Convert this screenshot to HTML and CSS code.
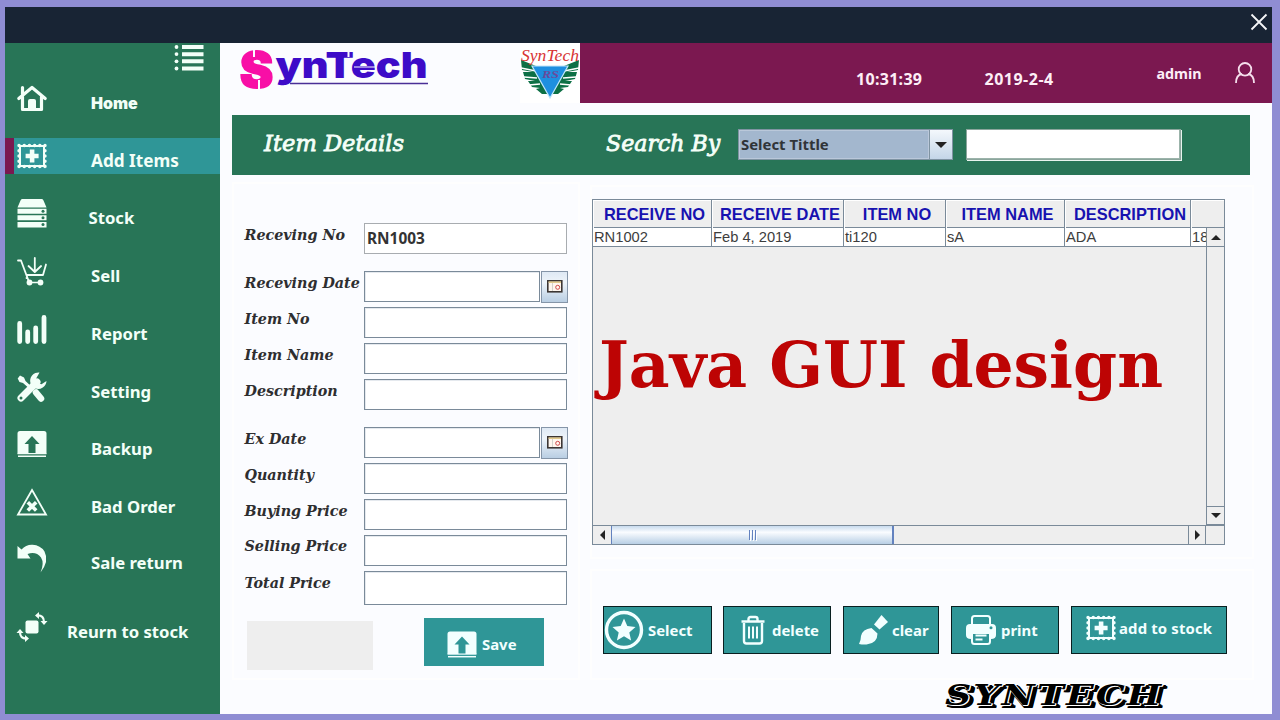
FILE: index.html
```
<!DOCTYPE html>
<html lang="en">
<head>
<meta charset="utf-8">
<title>SynTech - Item Details</title>
<link rel="stylesheet" href="styles.css">
</head>
<body>
<svg class="defs" width="0" height="0">
  <symbol id="i-stamp" viewBox="0 0 30 26">
    <rect x="3" y="3" width="24" height="20" fill="none" stroke="currentColor" stroke-width="2"/>
    <path d="M2 2.500h26M2 23.500h26M2 2.500v21M28 2.500v21" fill="none" stroke="currentColor" stroke-width="3.400" stroke-linecap="round" stroke-dasharray="0.100 5.100"/>
    <path d="M12.800 6.500h4.600v4.200h4.200v4.600h-4.200v4.200h-4.600v-4.200H8.600v-4.600h4.200z" fill="currentColor"/>
  </symbol>
  <symbol id="i-upload" viewBox="0 0 30 27">
    <path fill="currentColor" fill-rule="evenodd" d="M3 0.500h24a2.500 2.500 0 0 1 2.500 2.500v20H18.500V13.500h4L15 5.500 7.500 13.500h4V23H0.500V3A2.500 2.500 0 0 1 3 .5z"/>
    <path d="M.5 22.500h29v1.200H.5z" fill="currentColor"/>
    <path d="M1 25.700h28" stroke="currentColor" stroke-width="1.500"/>
  </symbol>
</svg>
<div class="window">
  <div class="titlebar">
    <svg class="close" viewBox="0 0 18 18"><path d="M1.500 1.500l15 15M16.500 1.500l-15 15"/></svg>
  </div>
  <div class="body">
    <nav class="sidebar">
      <svg class="menu" viewBox="0 0 30 28"><g fill="currentColor"><circle cx="2.500" cy="3" r="1.900"/><circle cx="2.500" cy="10.100" r="1.900"/><circle cx="2.500" cy="17.300" r="1.900"/><circle cx="2.500" cy="24.500" r="1.900"/><path d="M8 1h21.500v4H8zM8 8.200h21.500v4H8zM8 15.300h21.500v4H8zM8 22.500h21.500v4H8z"/></g></svg>
      <ul class="nav">
        <li><svg viewBox="0 0 30 30"><path d="M1.800 15.500L15 4.500l13.200 11M5.500 14v12.500h19V14M5.500 11V4.500" fill="none" stroke="currentColor" stroke-width="3.200" stroke-linecap="round" stroke-linejoin="round"/><path d="M11 26v-8q0-2 2-2h4q2 0 2 2v8z" fill="currentColor"/></svg><span class="lbl home">Home</span></li>
        <li class="active"><svg viewBox="0 0 30 26"><use href="#i-stamp"/></svg><span class="lbl add">Add Items</span></li>
        <li class="stock"><svg viewBox="0 0 30 30"><path d="M5 1h20q1 0 1.500 1.500L29.500 9.500h-29L3.500 2.500Q4 1 5 1z" fill="currentColor"/><path d="M.5 10.800h29v5H.5zM.5 17.300h29v5H.5zM.5 24h29v5.500H.5z" fill="currentColor"/><g fill="#287557"><circle cx="26" cy="13.300" r="1.500"/><circle cx="26" cy="19.800" r="1.500"/><circle cx="26" cy="26.500" r="1.500"/></g></svg><span class="lbl">Stock</span></li>
        <li><svg viewBox="0 0 30 30"><path d="M1 4.500h3l6.500 17.500M10 19h16l3-10.500M9.500 22h1M10.500 22l2 5M17.800 2v13M11.500 10l6.300 6 6.300-6" fill="none" stroke="currentColor" stroke-width="1.800" stroke-linecap="round" stroke-linejoin="round"/><path d="M12 26.500h11" stroke="currentColor" stroke-width="1.500"/><circle cx="12.500" cy="26.500" r="2.900" fill="currentColor"/><circle cx="23.500" cy="26.500" r="2.900" fill="currentColor"/></svg><span class="lbl">Sell</span></li>
        <li><svg viewBox="0 0 30 30"><path d="M2.700 9.500v18M10.700 18v9.500M18.700 14v13.500M27 3.500v24" stroke="currentColor" stroke-width="4.800" stroke-linecap="round"/></svg><span class="lbl">Report</span></li>
        <li><svg viewBox="0 0 30 30"><path d="M4 26L20 10" stroke="currentColor" stroke-width="7" stroke-linecap="round"/><path d="M22.500 .5a8.500 8.500 0 0 0-9 11l5 5a8.500 8.500 0 0 0 11-7.500l-5 3.300-4.500-1.300-1-4.200z" fill="currentColor"/><path d="M.7 6.500L3 3.500l4 2 1.500 3.500L16 16l-2 2-8-7-3.500-1z" fill="currentColor"/><path d="M19 20.500l5 6" stroke="currentColor" stroke-width="6.500" stroke-linecap="round"/><circle cx="4" cy="26" r="1.500" fill="#287557"/></svg><span class="lbl">Setting</span></li>
        <li><svg viewBox="0 0 30 27"><use href="#i-upload"/></svg><span class="lbl">Backup</span></li>
        <li><svg viewBox="0 0 30 30"><path d="M15 3L29 27.500H1z" fill="none" stroke="currentColor" stroke-width="1.800"/><path d="M10.800 15.200l8.400 8.400M19.200 15.200l-8.400 8.400" stroke="currentColor" stroke-width="3.600"/></svg><span class="lbl">Bad Order</span></li>
        <li><svg viewBox="0 0 30 30"><path d="M.5 3l4 3.500Q9 1.500 15.500 1.800 23.500 2.200 27.500 8.500 32.500 18 23.500 29.500 27.500 20 24 14.500 19 8 10.500 11l3 4.500H.5z" fill="currentColor"/></svg><span class="lbl">Sale return</span></li>
        <li class="to-stock"><svg viewBox="0 0 30 30"><rect x="8.500" y="8.500" width="13" height="13" rx="2" fill="currentColor"/><path d="M20 3.500q7-.5 7 6.500M10 26.500q-7 .5-7-6.500" fill="none" stroke="currentColor" stroke-width="2.200"/><path d="M18 3.500L22 0v7zM23.500 9h7L27 13zM12 26.500L8 23v7zM-.5 21h7L3 17z" fill="currentColor"/></svg><span class="lbl">Reurn to stock</span></li>
      </ul>
    </nav>
    <main class="main">
      <header class="header">
        <div class="brand">
          <svg class="logo" viewBox="0 0 200 60">
            <text class="logo-s" x="4" y="43.500" textLength="33" lengthAdjust="spacingAndGlyphs">S</text>
            <text class="logo-t" x="39.500" y="35" textLength="152" lengthAdjust="spacingAndGlyphs">ynTech</text>
            <path d="M18 5v9M23 37v10M112.500 7v7" stroke="#fbfcff" stroke-width="2"/>
            <path d="M118 24h21" stroke="#fbfcff" stroke-width="1"/>
            <path d="M54 40.500h138" stroke="#4a2f96" stroke-width="1.600"/>
          </svg>
          <svg class="emblem" viewBox="0 0 60 60">
            <path fill="#0d7045" d="M1 17l15 6h28l15-6-1 10-11 2 10 0-2 7-10 2 7 0-4 6-8 1 4 1-6 5H22l-6-5 4-1-8-1-4-6 7 0-10-2-2-7 10 0-11-2z"/>
            <path d="M1 25l15 3M4 34l13 1M9 42l11-1M59 25l-15 3M56 34l-13 1M51 42l-11-1" stroke="#fff" stroke-width="1.500"/>
            <path d="M12 23h36L30 55z" fill="#1e8fe0" stroke="#bfe5fa" stroke-width="1.200"/>
            <text class="emb-rs" x="22" y="35" textLength="17" lengthAdjust="spacingAndGlyphs">RS</text>
            <text class="emb-name" x="1" y="17.500" textLength="58" lengthAdjust="spacingAndGlyphs">SynTech</text>
          </svg>
        </div>
        <div class="status">
          <span class="time">10:31:39</span>
          <span class="date">2019-2-4</span>
          <span class="user">admin</span>
          <svg class="avatar" viewBox="0 0 20 22"><circle cx="10" cy="7.300" r="6.300"/><path d="M1 21q0-8 6-9M19 21q0-8-6-9"/></svg>
        </div>
      </header>
      <section class="band">
        <h1 class="heading">Item Details</h1>
        <span class="heading search">Search By</span>
        <div class="combo"><span class="combo-text">Select Tittle</span><span class="combo-btn"><svg viewBox="0 0 12 6"><path d="M0 0h12L6 6z"/></svg></span></div>
        <div class="search-input"></div>
      </section>
      <div class="content">
        <section class="panel form">
          <div class="row first"><label>Receving No</label><div class="field readonly">RN1003</div></div>
          <div class="row"><label>Receving Date</label><div class="field short"></div><div class="cal"><svg viewBox="0 0 16 13"><rect x=".8" y=".8" width="14" height="11" fill="#fff6ee" stroke="#3c3634" stroke-width="1.600"/><path d="M1.600 2.200h12.400" stroke="#dfc684" stroke-width="1.500"/><path d="M5.500 3v8" stroke="#d5d2cd"/><circle cx="10.700" cy="7.300" r="2" fill="none" stroke="#d04848"/></svg></div></div>
          <div class="row"><label>Item No</label><div class="field"></div></div>
          <div class="row"><label>Item Name</label><div class="field"></div></div>
          <div class="row"><label>Description</label><div class="field"></div></div>
          <div class="row exdate"><label>Ex Date</label><div class="field short"></div><div class="cal"><svg viewBox="0 0 16 13"><rect x=".8" y=".8" width="14" height="11" fill="#fff6ee" stroke="#3c3634" stroke-width="1.600"/><path d="M1.600 2.200h12.400" stroke="#dfc684" stroke-width="1.500"/><path d="M5.500 3v8" stroke="#d5d2cd"/><circle cx="10.700" cy="7.300" r="2" fill="none" stroke="#d04848"/></svg></div></div>
          <div class="row"><label>Quantity</label><div class="field"></div></div>
          <div class="row"><label>Buying Price</label><div class="field"></div></div>
          <div class="row selling"><label>Selling Price</label><div class="field"></div></div>
          <div class="row total"><label>Total Price</label><div class="field"></div></div>
          <div class="form-actions"><div class="blank"></div><div class="btn save"><svg viewBox="0 0 30 27"><use href="#i-upload"/></svg><span>Save</span></div></div>
        </section>
        <div class="right">
          <section class="panel table-panel">
            <div class="table">
              <div class="thead"><span>RECEIVE NO</span><span>RECEIVE DATE</span><span>ITEM NO</span><span>ITEM NAME</span><span>DESCRIPTION</span><span></span></div>
              <div class="tmid">
                <div class="view">
                  <div class="trow"><span>RN1002</span><span>Feb 4, 2019</span><span>ti120</span><span>sA</span><span>ADA</span><span>18</span></div>
                  <svg class="caption" viewBox="0 0 613 110"><text x="6" y="66" textLength="564" lengthAdjust="spacingAndGlyphs">Java GUI design</text></svg>
                </div>
                <div class="vbar"><span><svg viewBox="0 0 10 5"><path d="M0 5h10L5 0z"/></svg></span><span><svg viewBox="0 0 10 5"><path d="M0 0h10L5 5z"/></svg></span></div>
              </div>
              <div class="hbar"><span class="arrow"><svg viewBox="0 0 5 10"><path d="M5 0v10L0 5z"/></svg></span><span class="thumb"><i></i><i></i><i></i></span><span class="track"></span><span class="arrow r"><svg viewBox="0 0 5 10"><path d="M0 0v10l5-5z"/></svg></span><span class="corner"></span></div>
            </div>
          </section>
          <section class="panel actions">
            <div class="btn b-select"><svg viewBox="0 0 40 40"><circle cx="20" cy="20" r="17.500" fill="none" stroke="currentColor" stroke-width="3.400"/><path d="M20 8.500l3.300 7.600 8.200.8-6.200 5.500 1.800 8.100-7.100-4.200-7.100 4.200 1.800-8.100-6.200-5.500 8.200-.8z" fill="currentColor"/></svg><span>Select</span></div>
            <div class="btn b-delete"><svg viewBox="0 0 24 30"><g fill="none" stroke="currentColor"><path d="M.5 6.500h23M3 8v18q0 2.500 2.500 2.500h13q2.500 0 2.500-2.500V8" stroke-width="2.400"/><path d="M7.500 6V4q0-2 2-2h5q2 0 2 2v2" stroke-width="2.400"/><path d="M8 11.500v12M12 11.500v12M16 11.500v12" stroke-width="2"/></g></svg><span>delete</span></div>
            <div class="btn b-clear"><svg viewBox="0 0 30 30"><path d="M22.500 0L29 7 20.500 14.500l-5.500-5z" fill="currentColor"/><path d="M12.500 13l6 5.500q0 10-11 11-4 .3-7.500-.5Q2 25 2 21 3.500 14 12.500 13z" fill="currentColor"/></svg><span>clear</span></div>
            <div class="btn b-print"><svg viewBox="0 0 30 30"><path d="M6 10V3.500Q6 1 8.500 1h13Q24 1 24 3.500V10" fill="none" stroke="currentColor" stroke-width="2"/><path d="M4 9h22q4 0 4 4v7q0 4-5 4v-7H5v7q-5 0-5-4v-7q0-4 4-4z" fill="currentColor"/><path d="M6 18h18v8.500q0 2.500-2.500 2.500h-13Q6 29 6 26.500z" fill="none" stroke="currentColor" stroke-width="2"/><path d="M9.500 20.500h11M9.500 24.500h7" stroke="currentColor" stroke-width="1.800"/><circle cx="25" cy="12.800" r="1.500" fill="#2f9697"/></svg><span>print</span></div>
            <div class="btn b-add"><svg viewBox="0 0 30 26"><use href="#i-stamp"/></svg><span>add to stock</span></div>
          </section>
          <div class="footer-logo">SYNTECH</div>
        </div>
      </div>
    </main>
  </div>
</div>
</body>
</html>
```
FILE: styles.css
```
* { box-sizing: border-box; }
body { margin: 0; width: 1280px; height: 720px; overflow: hidden; background: #8f8dd3; padding: 7px 8px 6px 5px; font-family: "Noto Sans", sans-serif; }
svg { display: block; flex: none; overflow: visible; }
.defs { position: absolute; }
.window { width: 1267px; height: 707px; display: flex; flex-direction: column; background: #fbfcff; }
.titlebar { height: 36px; background: #182434; display: flex; justify-content: flex-end; padding: 6px 4px 0 0; }
.close { width: 18px; height: 18px; fill: none; stroke: #f4f6f8; stroke-width: 1.8; }
.body { flex: 1; display: flex; min-height: 0; }

/* Sidebar */
.sidebar { width: 215px; background: #287557; color: #f3fff8; overflow: hidden; }
.menu { width: 30px; height: 28px; margin: 1px 0 0 169px; }
.nav { list-style: none; margin: 8px 0 0; padding: 0; }
.nav li { display: flex; align-items: center; height: 36px; padding-left: 11.5px; margin-top: 22px; }
.nav li:first-child { margin-top: 0; }
.nav li:nth-child(3), .nav li:nth-child(7) { margin-top: 21px; }
.nav li:nth-child(9) { margin-top: 20px; }
.nav li.to-stock { margin-top: 33px; }
.nav svg { width: 30px; height: 30px; }
.nav li.active { background: #2f9697; border-left: 9px solid #7b1850; padding-left: 2.5px; }
.lbl { font-weight: 700; font-size: 16.7px; line-height: 20px; margin-left: 44.5px; padding-top: 9px; white-space: nowrap; }
.lbl.add { font-size: 17.2px; }
.stock .lbl { margin-left: 42px; }
.to-stock .lbl { margin-left: 20.5px; }
.lbl.home { font-family: Inter, sans-serif; font-weight: 900; font-size: 16px; }

/* Header */
.main { flex: 1; min-width: 0; }
.header { display: flex; height: 60px; }
.brand { width: 360px; display: flex; justify-content: space-between; padding-left: 16px; }
.logo { width: 200px; height: 60px; }
.emblem { width: 60px; height: 60px; background: #fff; }
.logo-s { font: 900 48px Inter, sans-serif; fill: #f80fa6; stroke: #f80fa6; stroke-width: 2; }
.logo-t { font: 900 36px Inter, sans-serif; fill: #3d0bc8; }
.emb-name { font: italic 16px "Liberation Serif", serif; fill: #d83434; }
.emb-rs { font: italic bold 11px "Liberation Serif", serif; fill: #6a4a9c; }
.status { width: 692px; display: flex; background: #7b1850; color: #fdeef6; font-weight: 700; font-size: 16px; line-height: 20px; white-space: nowrap; }
.time { width: 128.500px; margin-left: 276px; padding-top: 26px; letter-spacing: .3px; }
.date { width: 172px; padding-top: 26px; letter-spacing: .5px; }
.user { width: 78px; padding-top: 21px; font-size: 14.300px; }
.avatar { width: 20px; height: 22px; margin-top: 19px; fill: none; stroke: #f5dfec; stroke-width: 1.8; }

/* Search band */
.band { margin: 12px 22px 0 12px; height: 60px; background: #287557; display: flex; color: #f5fff8; }
.heading { margin: 14px 0 0 32px; width: 342px; font: italic 400 22.600px/28px "DejaVu Serif", serif; white-space: nowrap; -webkit-text-stroke: .8px; }
.heading.search { margin-left: 0; width: 132px; font-size: 22.100px; }
.combo { width: 215px; height: 31px; margin-top: 14px; border: 1px solid #7f93a2; display: flex; background: #a3b7ce; }
.combo-text { flex: 1; border: 1px solid #bac8da; color: #303438; font-weight: 700; font-size: 14.900px; line-height: 27px; padding-left: 1px; }
.combo-btn { width: 23px; border-left: 1px solid #7f93a2; background: linear-gradient(#f4f8fc, #c4d6e8); display: flex; align-items: center; justify-content: center; }
.combo-btn svg { width: 12px; height: 6px; fill: #222; }
.search-input { width: 215px; height: 31px; margin: 14px 0 0 13px; background: #fff; border: 1px solid #8ba59c; box-shadow: inset -1px -1px #9bb3aa, 1px 1px #e8f4ee; }

/* Form */
.content { display: flex; padding: 7px 0 0 12px; }
.panel { border: 2px solid #fefefe; }
.form { width: 348px; height: 498px; padding: 39px 0 0 10px; }
.row { display: flex; height: 31px; margin-bottom: 5px; }
.row.first { margin-bottom: 17px; }
.row.exdate { margin-top: 17px; }
.row.total { height: 34px; margin-bottom: 0; }
label { width: 120px; padding-top: 2px; font: italic bold 14.300px/20px "DejaVu Serif", serif; white-space: nowrap; color: #2e2e30; padding-left: .5px; }
.selling label { padding-top: 1px; }
.field { width: 203px; border: 1px solid #7a8a99; background: #fff; box-shadow: inset 1px 1px #e5e9ee; color: #333; font: bold 15.400px/28px "Noto Sans", sans-serif; padding-left: 2px; }
.field.readonly { border-color: #a8acb0; box-shadow: none; padding-top: 1px; }
.field.short { width: 176px; margin-right: 1px; }
.cal { width: 27px; height: 32px; border: 1px solid #8595a8; background: linear-gradient(#dfe9f4, #eef4fa 35%, #b9cee3); display: flex; justify-content: center; padding-top: 8px; }
.cal svg { width: 16px; height: 13px; }
.form-actions { display: flex; margin: 13px 0 0 3px; }
.blank { width: 126px; height: 49px; margin-top: 3px; background: #eee; }
.btn { display: flex; align-items: center; height: 48px; background: #2f9697; color: #f2ffff; font-weight: 700; font-size: 14.900px; white-space: nowrap; }
.btn svg { width: 30px; height: 30px; }
.save { width: 120px; margin-left: 51px; padding: 5px 0 0 23px; }
.save svg { height: 27px; }
.save span { margin: -2px 0 0 5px; }

/* Table */
.right { width: 664px; margin-left: 10px; }
.table-panel { height: 374px; margin-top: 3px; padding-top: 12px; }
.table { width: 633px; height: 346px; border: 1px solid #7a8a99; background: #eee; display: flex; flex-direction: column; }
.thead { display: grid; grid-template-columns: 119px 132px 102px 119px 126px 33px; height: 28px; border-bottom: 1px solid #7a8a99; }
.thead span { border-right: 1px solid #7a8a99; text-align: center; padding-left: 5px; font: bold 16.400px/29px "Liberation Sans", sans-serif; color: #1712b0; white-space: nowrap; box-shadow: inset 1px 1px #fff; }
.thead span:last-child { border-right: 0; }
.tmid { flex: 1; display: flex; min-height: 0; }
.view { width: 613px; overflow: hidden; }
.trow { display: grid; grid-template-columns: 119px 132px 102px 119px 126px 15px; height: 19px; background: #fff; border-bottom: 1px solid #7a8a99; font: 14.700px/18px "Liberation Sans", sans-serif; color: #3d3d3d; white-space: nowrap; }
.trow span { border-right: 1px solid #7a8a99; padding-left: 1px; overflow: hidden; }
.trow span:last-child { border-right: 0; }
.caption { width: 613px; height: 110px; margin-top: 74px; }
.caption text { font: bold 64px "DejaVu Serif", serif; fill: #bd0404; }
.vbar { width: 18px; border-left: 1px solid #7a8a99; display: flex; flex-direction: column; justify-content: space-between; }
.vbar span { height: 19px; border-bottom: 1px solid #7a8a99; display: flex; align-items: center; justify-content: center; }
.vbar span:last-child { border-top: 1px solid #7a8a99; border-bottom: 1px solid #7a8a99; }
.vbar svg { width: 10px; height: 5px; fill: #222; }
.hbar { display: flex; height: 19px; border-top: 1px solid #7a8a99; }
.arrow { width: 18px; display: flex; align-items: center; justify-content: center; }
.arrow svg { width: 5px; height: 10px; fill: #222; }
.thumb { width: 283px; border: 1px solid #6382bf; border-width: 0 2px 0 1px; background: linear-gradient(#c8dbee, #fafcff 35%, #b8cfe5); display: flex; align-items: center; justify-content: center; gap: 2px; }
.thumb i { width: 1px; height: 10px; background: #6382bf; box-shadow: 1px 1px #fff; }
.track { flex: 1; }
.arrow.r { border: 1px solid #7a8a99; border-width: 0 1px; }
.corner { width: 18px; }

/* Table actions */
.actions { height: 111px; margin-top: 10px; padding: 35px 0 0 11px; display: flex; }
.actions .btn { border: 1px solid #091f20; }
.actions .btn span { margin-top: -1px; }
.actions .b-select { width: 109px; margin-right: 11px; }
.b-select svg { width: 40px; height: 40px; }
.b-select span { margin-left: 4px; }
.actions .b-delete { width: 108px; margin-right: 12px; padding-left: 17px; }
.b-delete svg { width: 24px; }
.b-delete span { margin-left: 7px; }
.actions .b-clear { width: 96px; margin-right: 12px; padding-left: 15px; }
.b-clear span { margin-left: 3px; }
.actions .b-print { width: 108px; margin-right: 12px; padding-left: 14px; }
.b-print span { margin-left: 5px; }
.actions .b-add { width: 156px; padding: 0 0 4px 14px; }
.b-add svg { height: 26px; }
.b-add span { margin-left: 3px; letter-spacing: .15px; }
.footer-logo { width: 170px; height: 32px; margin: 0 0 0 355px; font: italic bold 28px/32px "DejaVu Serif", serif; letter-spacing: 1.6px; white-space: nowrap; color: #000; transform: scaleX(1.3); transform-origin: 0 0; text-shadow: -.7px -1px #fff, .7px 1px #fff, 1px 0 #fff, 2px 1px #000, 3px 1px #000, 3px 2px #000, 4px 2px #000, 4px 3px #000, 3px 3px #000, 2px 3px #000, 1px 3px #000; }
```
